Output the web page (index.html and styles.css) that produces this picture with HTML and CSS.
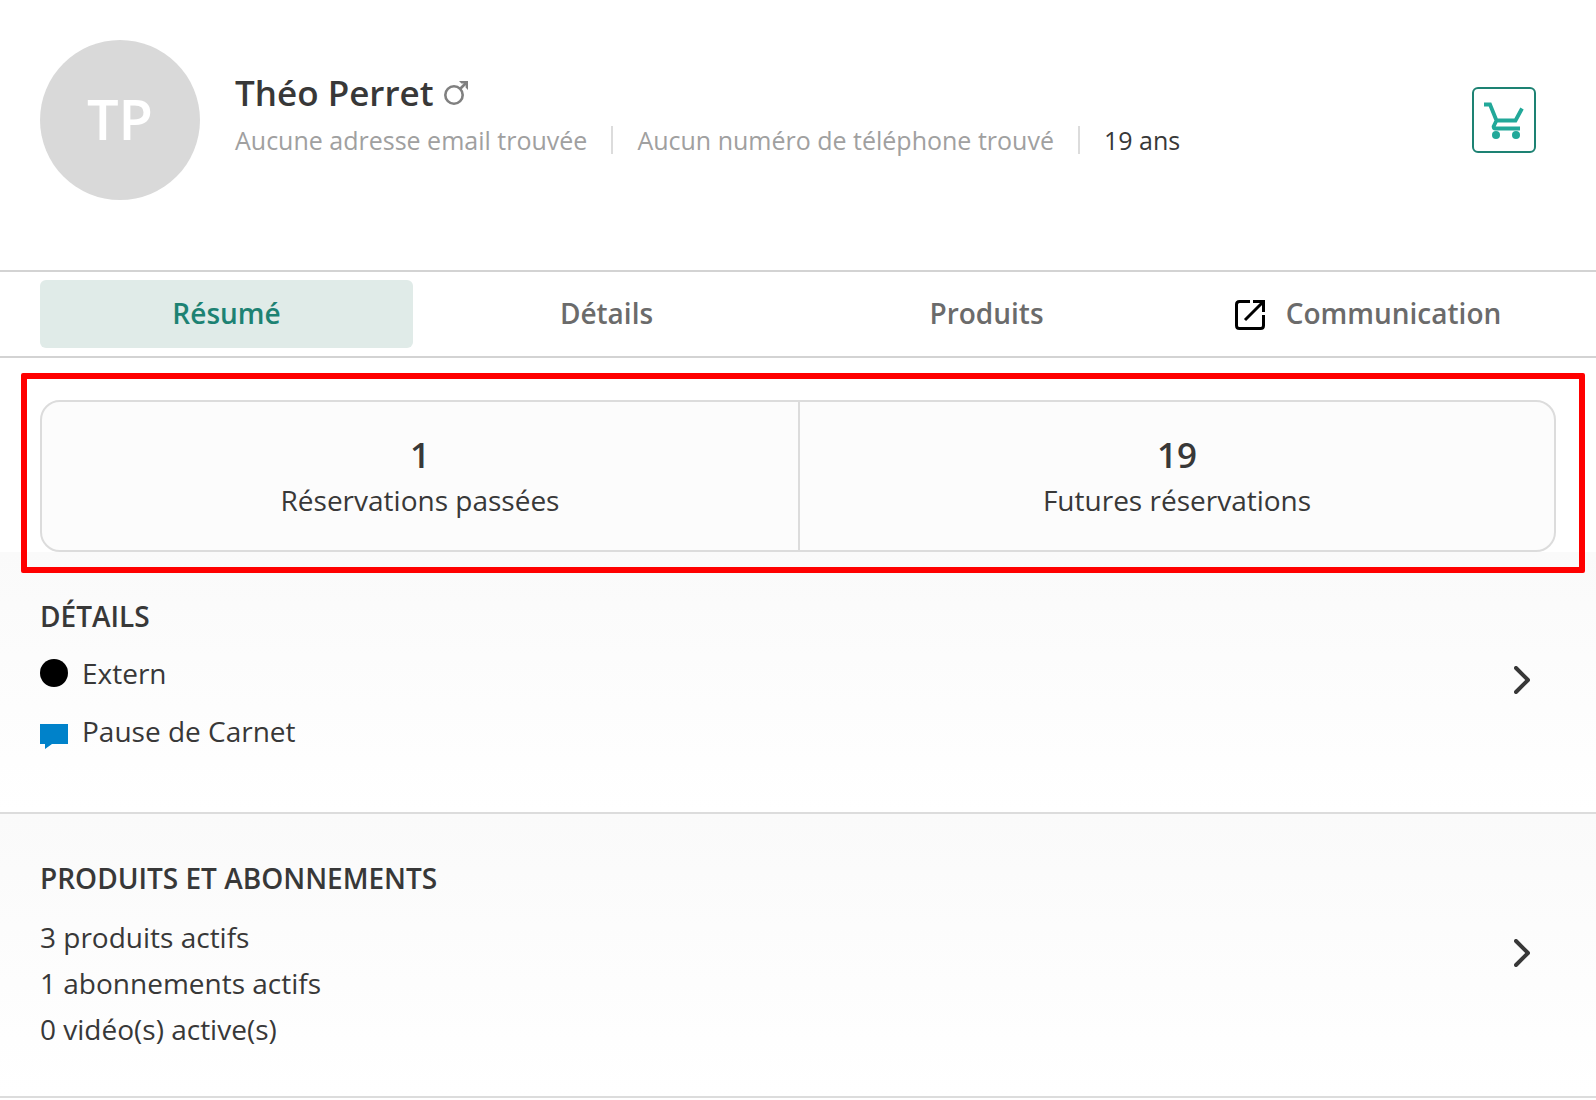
FILE: index.html
```html
<!DOCTYPE html>
<html lang="fr">

<head>
    <meta charset="UTF-8">
    <meta name="viewport" content="width=device-width, initial-scale=1.0">
    <title>Théo Perret</title>
    <link rel="stylesheet" href="styles.css">
</head>

<body>
    <header class="profile">
        <div class="avatar">TP</div>
        <div class="profile-info">
            <h1 class="profile-name">
                Théo Perret
                <svg class="gender" viewBox="0 0 24 24" aria-hidden="true">
                    <circle cx="10" cy="14" r="8.7" />
                    <path d="M16 8L22 2" />
                    <path class="gender-head" d="M15 0H24V9L21.6 6.6V2.4H17.4Z" />
                </svg>
            </h1>
            <ul class="profile-meta">
                <li class="missing">Aucune adresse email trouvée</li>
                <li class="missing">Aucun numéro de téléphone trouvé</li>
                <li>19 ans</li>
            </ul>
        </div>
        <button type="button" class="cart-button" aria-label="Panier">
            <svg viewBox="0 0 40 38" aria-hidden="true">
                <path d="M0 3.5H6L12.5 19.5H31.5L38 7.5M12.5 19.5L9.6 25.5Q9.6 27.5 11.5 27.5H36" />
                <circle cx="12" cy="34" r="4" />
                <circle cx="32" cy="34" r="4" />
            </svg>
        </button>
    </header>

    <nav class="tabs">
        <a href="#resume" class="tab active">Résumé</a>
        <a href="#details" class="tab">Détails</a>
        <a href="#produits" class="tab">Produits</a>
        <a href="#communication" class="tab">
            <svg class="tab-icon" viewBox="0 0 36 36" aria-hidden="true">
                <path d="M18 4.5H7.5Q4.5 4.5 4.5 7.5V28.5Q4.5 31.5 7.5 31.5H28.5Q31.5 31.5 31.5 28.5V18M21 4.5H31.5V15M31 5L13 23" />
            </svg>
            Communication
        </a>
    </nav>

    <main>
        <div class="highlight">
            <div class="stats">
                <div class="stat">
                    <strong>1</strong>
                    <span>Réservations passées</span>
                </div>
                <div class="stat">
                    <strong>19</strong>
                    <span>Futures réservations</span>
                </div>
            </div>
        </div>

        <section class="panel" id="details">
            <div>
                <h2>Détails</h2>
                <ul class="tags">
                    <li><span class="dot"></span>Extern</li>
                    <li>
                        <svg class="bubble" viewBox="0 0 28 36" aria-hidden="true">
                            <path d="M0 11H28V31H12L5 36V31H0Z" />
                        </svg>
                        Pause de Carnet
                    </li>
                </ul>
            </div>
            <a href="#details" class="chevron" aria-label="Voir les détails">
                <svg viewBox="0 0 16 28" aria-hidden="true"><path d="M2 2L14 14L2 26" /></svg>
            </a>
        </section>

        <section class="panel" id="produits">
            <div>
                <h2>Produits et abonnements</h2>
                <ul class="counts">
                    <li>3 produits actifs</li>
                    <li>1 abonnements actifs</li>
                    <li>0 vidéo(s) active(s)</li>
                </ul>
            </div>
            <a href="#produits" class="chevron" aria-label="Voir les produits">
                <svg viewBox="0 0 16 28" aria-hidden="true"><path d="M2 2L14 14L2 26" /></svg>
            </a>
        </section>
    </main>
</body>

</html>
```

FILE: styles.css
```css
* {
    box-sizing: border-box;
}

body {
    margin: 0;
    background-color: #fff;
    color: #383838;
    font-family: "Open Sans", "Noto Sans", sans-serif;
    font-size: 28px;
}

h1,
h2,
ul {
    margin: 0;
    padding: 0;
    list-style: none;
}

svg {
    display: block;
    fill: none;
}

/* Profile header */
.profile {
    display: flex;
    align-items: flex-start;
    padding: 40px 60px 70px 40px;
}

.avatar {
    display: flex;
    align-items: center;
    justify-content: center;
    width: 160px;
    height: 160px;
    padding-bottom: 4px;
    border-radius: 50%;
    background-color: #d9d9d9;
    color: #fff;
    font-size: 56px;
    font-weight: 600;
}

.profile-info {
    flex: 1;
    padding: 28px 0 0 35px;
}

.profile-name {
    display: flex;
    align-items: center;
    gap: 10px;
    font-size: 35px;
    font-weight: 600;
    line-height: 50px;
}

.gender {
    width: 24px;
    height: 24px;
    stroke: #808080;
    stroke-width: 2.6;
}

.gender-head {
    fill: #808080;
    stroke: none;
}

.profile-meta {
    display: flex;
    align-items: center;
    padding-top: 8px;
    font-size: 25px;
    line-height: 28px;
}

.profile-meta li + li {
    margin-left: 24px;
    padding-left: 24px;
    border-left: 2px solid #dcdcdc;
}

.missing {
    color: #a0a0a0;
}

.cart-button {
    display: flex;
    align-items: center;
    justify-content: center;
    align-self: center;
    width: 64px;
    height: 66px;
    padding: 0;
    border: 2px solid #1d8273;
    border-radius: 6px;
    background-color: #fff;
    cursor: pointer;
}

.cart-button svg {
    width: 40px;
    height: 38px;
    stroke: #22a899;
    stroke-width: 3.8;
}

.cart-button circle {
    fill: #22a899;
    stroke: none;
}

/* Tabs */
.tabs {
    display: grid;
    grid-template-columns: repeat(4, 1fr);
    gap: 7px;
    padding: 8px 43px 8px 40px;
    border-top: 2px solid #d3d3d3;
    border-bottom: 2px solid #d3d3d3;
}

.tab {
    display: flex;
    align-items: center;
    justify-content: center;
    gap: 18px;
    height: 68px;
    padding-bottom: 3px;
    border-radius: 6px;
    color: #6b6b6b;
    font-weight: 600;
    text-decoration: none;
}

.tab.active {
    background-color: #e0ebe8;
    color: #1d8273;
}

.tab-icon {
    width: 36px;
    height: 36px;
    margin-top: 5px;
    stroke: #000;
    stroke-width: 3;
}

/* Booking counters */
.highlight {
    position: relative;
    padding: 42px 40px 0;
}

.highlight::after {
    content: "";
    position: absolute;
    top: 15px;
    right: 11px;
    bottom: -21px;
    left: 21px;
    border: 6px solid #f00;
    border-radius: 2px;
    pointer-events: none;
}

.stats {
    display: grid;
    grid-template-columns: 1fr 1fr;
    border: 2px solid #dcdcdc;
    border-radius: 20px;
    background-color: #fcfcfc;
}

.stat {
    display: flex;
    flex-direction: column;
    align-items: center;
    padding: 28px 0 30px;
}

.stat + .stat {
    border-left: 2px solid #dcdcdc;
}

.stat strong {
    font-size: 35px;
    font-weight: 600;
    line-height: 50px;
}

.stat span {
    line-height: 40px;
}

/* Panels */
.panel {
    display: flex;
    align-items: center;
    justify-content: space-between;
    padding: 40px 66px 44px 40px;
    border-bottom: 2px solid #dcdcdc;
    background: linear-gradient(#fafafa, #fff);
}

.panel h2 {
    margin-bottom: 12px;
    font-size: 28px;
    font-weight: 600;
    line-height: 48px;
    text-transform: uppercase;
}

.tags li {
    display: flex;
    align-items: center;
    gap: 14px;
    margin-bottom: 16px;
    line-height: 42px;
}

.dot {
    width: 28px;
    height: 28px;
    border-radius: 50%;
    background-color: #000;
}

.bubble {
    width: 28px;
    height: 36px;
    fill: #0082ca;
}

.counts li {
    line-height: 46px;
}

.chevron svg {
    width: 16px;
    height: 28px;
    stroke: #383838;
    stroke-width: 4;
    stroke-linecap: round;
    stroke-linejoin: round;
}
```
